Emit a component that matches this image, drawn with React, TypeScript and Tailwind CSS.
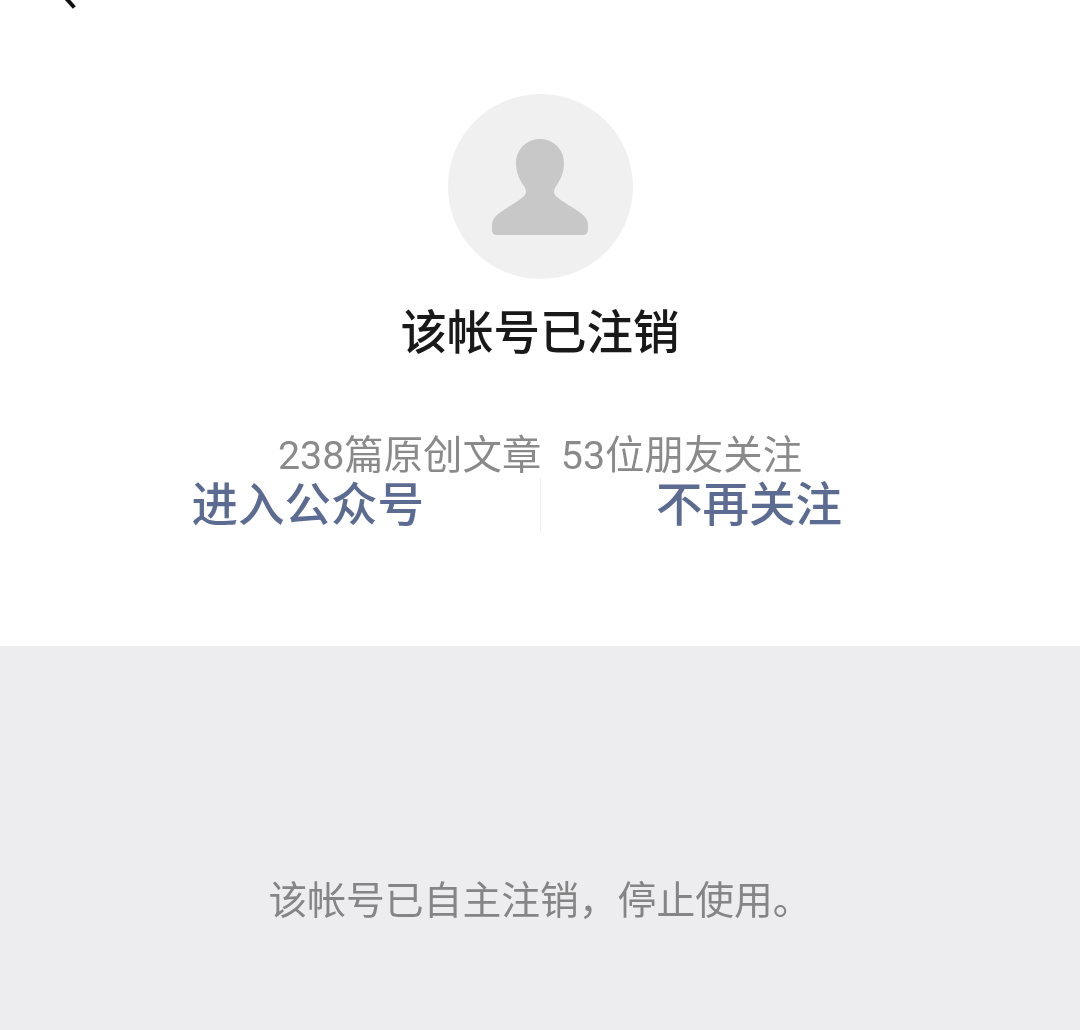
const cjk = "font-['Roboto','Noto_Sans_CJK_SC',sans-serif]";

const App = () => {
  return (
    <div className={`flex flex-col w-[1080px] h-[1030px] overflow-hidden bg-white ${cjk}`}>
      <div className="relative flex flex-col items-center h-[646px] shrink-0 pt-[94px]">
        {/* back arrow, mostly cut off by the top edge */}
        <svg className="absolute left-[50px] top-0" width="30" height="12" viewBox="0 0 30 12">
          <path d="M14 -4 L23 6" stroke="#111" strokeWidth="4" strokeLinecap="square" fill="none" />
        </svg>

        <div className="flex items-center justify-center w-[185px] h-[185px] rounded-full bg-[#f0f0f0] blur-[0.6px]">
          <svg width="100" height="100" viewBox="0 0 100 100">
            <path
              d="M50 2 C63 2 74 12 74 26 C74 36 70 43 67 48 C63 53 63 57 67 60 C73 65 84 71 92 77 C96 80 98 84 98 88 L98 93 C98 96 96 98 93 98 L7 98 C4 98 2 96 2 93 L2 88 C2 84 4 80 8 77 C16 71 27 65 33 60 C37 57 37 53 33 48 C30 43 26 36 26 26 C26 12 37 2 50 2 Z"
              fill="#c8c8c8"
            />
          </svg>
        </div>

        <h1 className="mt-[26px] text-[46.5px] leading-[56px] font-medium text-[#191919] blur-[0.4px]">该帐号已注销</h1>

        <p className="mt-[73px] text-[39.4px] leading-[44px] text-[#8a8a8a] whitespace-pre blur-[0.5px]">238篇原创文章  53位朋友关注</p>

        <div className="flex items-center w-full h-[54px] text-[46.5px] leading-[54px] font-medium text-[#5c6b91]">
          <div className="flex justify-end w-[424px] blur-[0.5px]">进入公众号</div>
          <div className="w-px h-[54px] ml-[116px] bg-[#f0f0f0]" />
          <div className="ml-[115px] blur-[0.5px]">不再关注</div>
        </div>
      </div>

      <div className="flex-1 flex justify-center bg-[#ededef] pt-[232px]">
        <p className="text-[38.8px] leading-[46px] text-[#858585] blur-[0.4px]">该帐号已自主注销，停止使用。</p>
      </div>
    </div>
  );
};

export default App;
